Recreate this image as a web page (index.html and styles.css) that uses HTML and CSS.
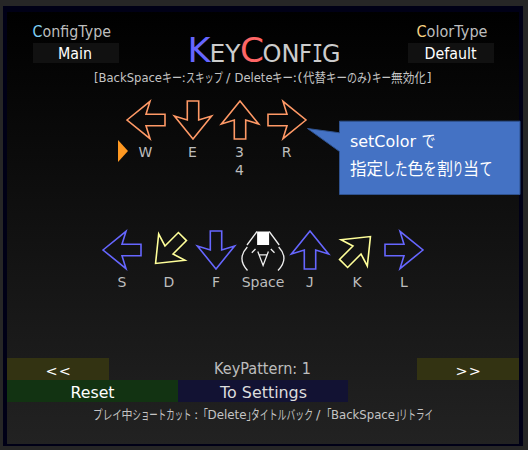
FILE: index.html
```html
<!DOCTYPE html>
<html lang="ja">
<head>
<meta charset="utf-8">
<title>KeyConfig</title>
<link rel="stylesheet" href="styles.css">
</head>
<body>
<svg class="defs" width="0" height="0"><defs>
<path id="arrow" d="M-19 0L4-18.6L0-5.7H19V5.7H0L4 18.6Z"/>
</defs></svg>
<main class="panel">
  <header class="header">
    <section class="option">
      <svg width="86" height="31" viewBox="33 12 86 31"><text class="label" x="32.5" y="36.5" textLength="78.5" lengthAdjust="spacingAndGlyphs"><tspan class="cyan">C</tspan>onfigType</text></svg>
      <div class="value"><svg width="86" height="20" viewBox="33 43 86 20"><text x="58" y="59" textLength="34" lengthAdjust="spacingAndGlyphs">Main</text></svg></div>
    </section>
    <h1 class="title"><svg width="160" height="58" viewBox="183 12 160 58">
      <text class="initial blue" x="186.5" y="62" textLength="23" lengthAdjust="spacingAndGlyphs">K</text>
      <text x="208.5" y="62" textLength="31" lengthAdjust="spacingAndGlyphs">EY</text>
      <text class="initial red" x="239" y="62" textLength="24" lengthAdjust="spacingAndGlyphs">C</text>
      <text x="261.5" y="62" textLength="37" lengthAdjust="spacingAndGlyphs">ON</text>
      <text x="298" y="62" textLength="13" lengthAdjust="spacingAndGlyphs">F</text>
      <text class="mono" x="311" y="62" textLength="11" lengthAdjust="spacingAndGlyphs">I</text>
      <text x="321" y="62" textLength="18.5" lengthAdjust="spacingAndGlyphs">G</text>
    </svg></h1>
    <section class="option">
      <svg width="86" height="31" viewBox="408 12 86 31"><text class="label" x="416.5" y="36.5" textLength="71" lengthAdjust="spacingAndGlyphs"><tspan class="gold">C</tspan>olorType</text></svg>
      <div class="value"><svg width="86" height="20" viewBox="408 43 86 20"><text x="424.5" y="59" textLength="52" lengthAdjust="spacingAndGlyphs">Default</text></svg></div>
    </section>
  </header>

  <p class="note"><svg width="512" height="28" viewBox="7 70 512 28">
    <text x="94" y="82" textLength="68" lengthAdjust="spacingAndGlyphs">[BackSpace</text>
    <text x="162" y="82" textLength="20" lengthAdjust="spacingAndGlyphs">キー</text>
    <text x="181.5" y="82">:</text>
    <text x="186" y="82" textLength="37" lengthAdjust="spacingAndGlyphs">スキップ</text>
    <text x="226" y="82">/</text>
    <text x="234.5" y="82" textLength="38" lengthAdjust="spacingAndGlyphs">Delete</text>
    <text x="272" y="82" textLength="21" lengthAdjust="spacingAndGlyphs">キー</text>
    <text x="292.5" y="82" textLength="10" lengthAdjust="spacingAndGlyphs">:(</text>
    <text x="303" y="82" textLength="23" lengthAdjust="spacingAndGlyphs">代替</text>
    <text x="326" y="82" textLength="21" lengthAdjust="spacingAndGlyphs">キー</text>
    <text x="347" y="82" textLength="20" lengthAdjust="spacingAndGlyphs">のみ</text>
    <text x="366.5" y="82">)</text>
    <text x="372" y="82" textLength="19" lengthAdjust="spacingAndGlyphs">キー</text>
    <text x="391" y="82" textLength="35" lengthAdjust="spacingAndGlyphs">無効化</text>
    <text x="426.5" y="82">]</text>
  </svg></p>

  <section class="keys upper">
    <svg class="cursor" width="10" height="22" viewBox="0 0 10 22"><path d="M0 0L10 11L0 22Z"/></svg>
    <div class="key orange"><svg width="40" height="44" viewBox="-20 -22 40 44"><use href="#arrow"/></svg><span>W</span></div>
    <div class="key orange"><svg width="40" height="44" viewBox="-20 -22 40 44"><use href="#arrow" transform="rotate(-90)"/></svg><span>E</span></div>
    <div class="key orange"><svg width="40" height="44" viewBox="-20 -22 40 44"><use href="#arrow" transform="rotate(90)"/></svg><span>3</span><span>4</span></div>
    <div class="key orange"><svg width="40" height="44" viewBox="-20 -22 40 44"><use href="#arrow" transform="rotate(180)"/></svg><span>R</span></div>
  </section>

  <section class="keys lower">
    <div class="key violet"><svg width="40" height="44" viewBox="-20 -22 40 44"><use href="#arrow"/></svg><span>S</span></div>
    <div class="key yellow"><svg width="40" height="44" viewBox="-20 -22 40 44"><use href="#arrow" transform="rotate(-45)"/></svg><span>D</span></div>
    <div class="key violet"><svg width="40" height="44" viewBox="-20 -22 40 44"><use href="#arrow" transform="rotate(-90)"/></svg><span>F</span></div>
    <div class="key white"><svg width="46" height="44" viewBox="240.5 228.5 46 44"><path class="solid" d="M257.6 232H269.6V245.5H257.6Z"/><path d="M257.5 232L247.5 245.5M247.8 247.5Q237 259 248 271M269.7 232L279.7 245.5M279.2 247.5Q290 259 278.5 271M252.3 253.3L256 249.5M271.3 249.5L275 253.3M258.3 252L263.6 266L268.9 252M259.5 255.3H267.7"/></svg><span>Space</span></div>
    <div class="key violet"><svg width="40" height="44" viewBox="-20 -22 40 44"><use href="#arrow" transform="rotate(90)"/></svg><span class="mono">J</span></div>
    <div class="key yellow"><svg width="40" height="44" viewBox="-20 -22 40 44"><use href="#arrow" transform="rotate(135)"/></svg><span>K</span></div>
    <div class="key violet"><svg width="40" height="44" viewBox="-20 -22 40 44"><use href="#arrow" transform="rotate(180)"/></svg><span>L</span></div>
  </section>

  <nav class="pattern">
    <div class="step"><svg width="102" height="22" viewBox="7 358 102 22"><text x="45.5" y="376" letter-spacing="1.2">&lt;&lt;</text></svg></div>
    <svg width="308" height="22" viewBox="109 358 308 22"><text class="label" x="214" y="374" textLength="97" lengthAdjust="spacingAndGlyphs">KeyPattern: 1</text></svg>
    <div class="step"><svg width="102" height="22" viewBox="417 358 102 22"><text x="455.5" y="376" letter-spacing="1.2">&gt;&gt;</text></svg></div>
  </nav>
  <div class="actions">
    <div class="reset"><svg width="171" height="21" viewBox="7 380 171 21"><text x="70.5" y="397.5" textLength="44" lengthAdjust="spacingAndGlyphs">Reset</text></svg></div>
    <div class="settings"><svg width="170" height="21" viewBox="178 380 170 21"><text x="220" y="397.5" textLength="87" lengthAdjust="spacingAndGlyphs">To Settings</text></svg></div>
  </div>
  <footer class="note"><svg width="512" height="42" viewBox="7 402 512 42">
    <text x="93" y="419" textLength="29" lengthAdjust="spacingAndGlyphs">プレイ</text>
    <text x="121.5" y="419" textLength="11" lengthAdjust="spacingAndGlyphs">中</text>
    <text x="132.5" y="419" textLength="59" lengthAdjust="spacingAndGlyphs">ショートカット</text>
    <text x="194" y="419">:</text>
    <text x="198" y="419" textLength="10" lengthAdjust="spacingAndGlyphs">「</text>
    <text x="207.5" y="419" textLength="39" lengthAdjust="spacingAndGlyphs">Delete</text>
    <text x="246.5" y="419" textLength="10" lengthAdjust="spacingAndGlyphs">」</text>
    <text x="251" y="419" textLength="62" lengthAdjust="spacingAndGlyphs">タイトルバック</text>
    <text x="316" y="419">/</text>
    <text x="321.5" y="419" textLength="10" lengthAdjust="spacingAndGlyphs">「</text>
    <text x="331" y="419" textLength="64" lengthAdjust="spacingAndGlyphs">BackSpace</text>
    <text x="395" y="419" textLength="10" lengthAdjust="spacingAndGlyphs">」</text>
    <text x="399" y="419" textLength="34" lengthAdjust="spacingAndGlyphs">リトライ</text>
  </svg></footer>
</main>
<aside class="callout"><svg width="215" height="76" viewBox="306 120 215 76">
  <path d="M339.5 121.2H520V194.5H339.5V151.5L307.5 128.5L339.5 132.8Z"/>
  <text x="350" y="147" textLength="66" lengthAdjust="spacingAndGlyphs">setColor</text>
  <text x="421.5" y="147" textLength="14" lengthAdjust="spacingAndGlyphs">で</text>
  <text x="350" y="174.5" textLength="33" lengthAdjust="spacingAndGlyphs">指定</text>
  <text x="382.5" y="174.5" textLength="25" lengthAdjust="spacingAndGlyphs">した</text>
  <text x="407.5" y="174.5" textLength="16" lengthAdjust="spacingAndGlyphs">色</text>
  <text x="423.5" y="174.5" textLength="13" lengthAdjust="spacingAndGlyphs">を</text>
  <text x="437" y="174.5" textLength="16" lengthAdjust="spacingAndGlyphs">割</text>
  <text x="452.5" y="174.5" textLength="11" lengthAdjust="spacingAndGlyphs">り</text>
  <text x="463" y="174.5" textLength="16" lengthAdjust="spacingAndGlyphs">当</text>
  <text x="479.5" y="174.5" textLength="13" lengthAdjust="spacingAndGlyphs">て</text>
</svg></aside>
</body>
</html>
```
FILE: styles.css
```css
* { box-sizing: border-box; }
body {
  margin: 0;
  width: 528px;
  height: 450px;
  padding: 6px 5px 4px 3px;
  overflow: hidden;
  background: #262626;
  color: #fff;
  font: 16px "DejaVu Sans", "Noto Sans CJK JP", sans-serif;
}
svg { display: block; fill: currentColor; overflow: visible; }
.defs { position: absolute; }
.panel {
  width: 520px;
  height: 440px;
  border: solid #000016;
  border-width: 6px 4px 2px;
  background: linear-gradient(#000, #222);
  display: flex;
  flex-direction: column;
}
.header { display: flex; justify-content: space-between; height: 58px; padding: 0 25px 0 26px; }
.option { width: 86px; font-size: 16px; }
.label { fill: #bdbdbd; font-size: 15.5px; }
.value { height: 20px; background: #111; }
.title { margin: 0; font-size: 25px; font-weight: 400; color: #ccc; }
.initial { font-size: 34.5px; }
.mono { font-family: "DejaVu Sans Mono", monospace; }
.blue { fill: #6666ff; }
.red { fill: #ff6666; }
.cyan { fill: #7fd0f5; }
.gold { fill: #f5d080; }
.note { margin: 0; height: 28px; font-size: 13px; color: #c4c4c4; }
.keys { position: relative; display: flex; height: 130px; }
.upper { margin-left: 115px; }
.lower { margin-left: 91.5px; }
.key {
  width: 47px;
  display: flex;
  flex-direction: column;
  align-items: center;
  font-size: 14px;
  line-height: 18px;
}
.key svg { fill: none; stroke: currentColor; stroke-width: 1.6; margin-bottom: 1px; }
.key.white svg { stroke-width: 1.3; }
.key span { color: #bdbdbd; }
.orange { color: #ff9966; }
.violet { color: #6666ff; }
.yellow { color: #ffff99; }
.white { color: #eee; }
.key svg .solid { fill: #fff; stroke: none; }
.cursor { position: absolute; left: -4.5px; top: 41.5px; fill: #ff9922; }
.pattern { display: flex; height: 22px; font-size: 14.5px; }
.step { width: 102px; background: #333312; }
.actions { display: flex; height: 22px; font-size: 16.5px; }
.reset { width: 171px; background: #123312; }
.settings { width: 170px; background: #121233; color: #ddd; }
.callout { position: absolute; left: 306px; top: 120px; font-size: 16.5px; }
.callout path { fill: #4472c4; stroke: #2f528f; }
```
